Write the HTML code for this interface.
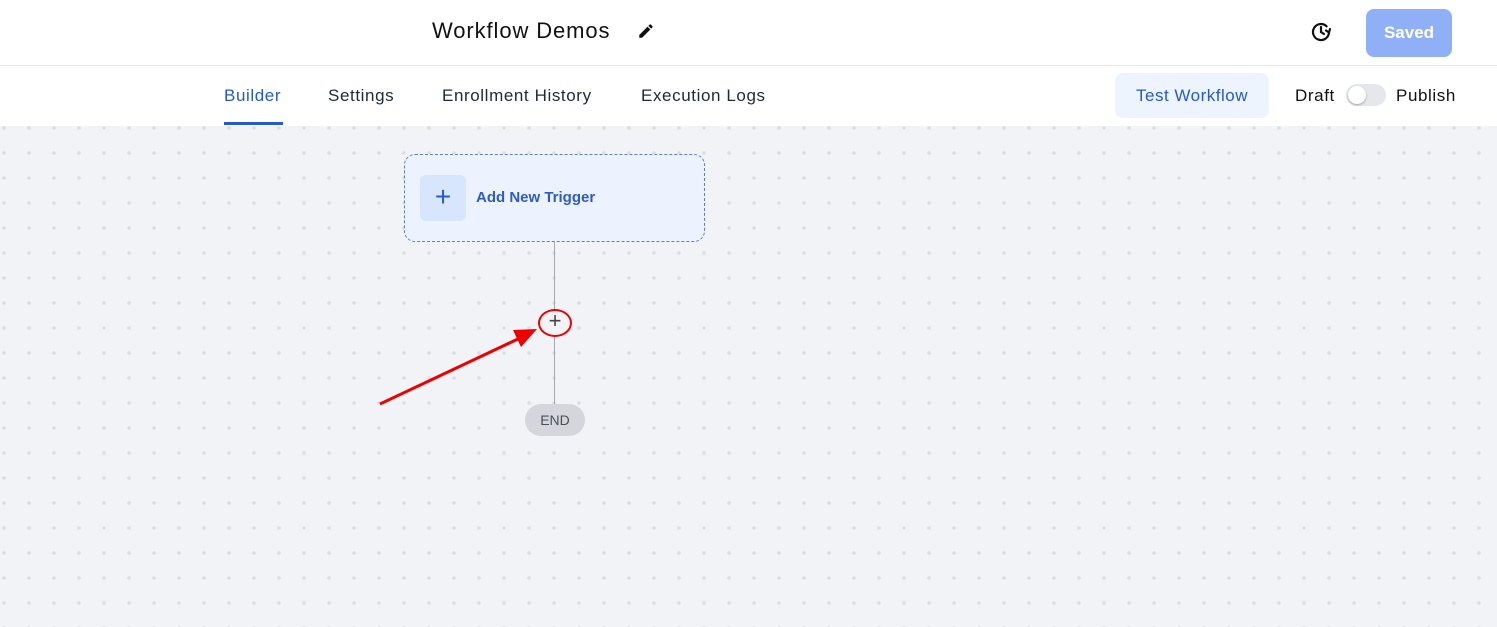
<!DOCTYPE html>
<html><head><style>
*{margin:0;padding:0;box-sizing:border-box}
body{width:1497px;height:627px;overflow:hidden;font-family:"Liberation Sans",sans-serif;background:#fff;position:relative}
.top{position:absolute;left:0;top:0;width:1497px;height:66px;border-bottom:1px solid #e5e7eb}
.title{position:absolute;left:432px;top:18px;font-size:22px;color:#111;letter-spacing:0.9px}
.tabs{position:absolute;top:66px;left:0;width:1497px;height:60px}
.tab{position:absolute;top:20px;font-size:17px;color:#1f2937;letter-spacing:0.6px}
.canvas{position:absolute;left:0;top:126px;width:1497px;height:501px;background-color:#f2f3f7;
background-image:radial-gradient(circle,#dcdde2 1.6px,transparent 2px);background-size:25px 25px;background-position:-8.5px -10.5px}
</style></head><body>
<div class="top">
<div class="title">Workflow Demos</div>
<svg style="position:absolute;left:637px;top:22px" width="18" height="18" viewBox="0 0 24 24"><path d="M3 17.25V21h3.75L17.81 9.94l-3.75-3.75L3 17.25zM20.71 7.04a1 1 0 000-1.41l-2.34-2.34a1 1 0 00-1.41 0l-1.83 1.83 3.75 3.75 1.83-1.83z" fill="#111"/></svg>
<svg style="position:absolute;left:1309px;top:20px" width="24" height="24" viewBox="0 0 24 24" fill="none" stroke="#111" stroke-width="2.2" stroke-linecap="round"><path d="M20 12a8 8 0 1 1-2.4-5.7"/><path d="M12 7v5l3 2"/><path d="M21 9l-1 3.5-3-2"/></svg>
<div style="position:absolute;left:1366px;top:9px;width:86px;height:48px;border-radius:8px;background:#8fb0f7;color:#fff;font-weight:bold;font-size:17px;text-align:center;line-height:48px">Saved</div>
</div>
<div class="tabs">
<div class="tab" style="left:224px;color:#2459d2">Builder</div>
<div style="position:absolute;left:224px;top:56px;width:59px;height:3px;background:#2459d2"></div>
<div class="tab" style="left:328px">Settings</div>
<div class="tab" style="left:442px">Enrollment History</div>
<div class="tab" style="left:641px">Execution Logs</div>
<div style="position:absolute;left:1115px;top:7px;width:154px;height:45px;border-radius:8px;background:#eef4fe;color:#2459d2;font-size:17px;letter-spacing:0.5px;text-align:center;line-height:45px">Test Workflow</div>
<div class="tab" style="left:1295px;color:#111">Draft</div>
<div style="position:absolute;left:1346px;top:18px;width:40px;height:22px;border-radius:11px;background:#e5e7eb"><div style="position:absolute;left:2px;top:2px;width:18px;height:18px;border-radius:50%;background:#fff;box-shadow:0 1px 2px rgba(0,0,0,.3)"></div></div>
<div class="tab" style="left:1396px;color:#111">Publish</div>
</div>
<div class="canvas"></div>
<div style="position:absolute;left:404px;top:154px;width:301px;height:88px;border:1px dashed #5b7fc4;border-radius:11px;background:#ecf3fe"></div>
<div style="position:absolute;left:420px;top:175px;width:46px;height:46px;border-radius:6px;background:#d7e6fd;color:#2459d2;font-size:28px;text-align:center;line-height:44px">+</div>
<div style="position:absolute;left:476px;top:189px;font-size:15px;font-weight:bold;color:#2e5bc7">Add New Trigger</div>
<div style="position:absolute;left:554px;top:242px;width:1px;height:164px;background:#a7a9ae"></div>
<div style="position:absolute;left:538px;top:309px;width:34px;height:28px;border-radius:50%;background:#f2f3f7;border:2px solid #e00"></div>
<div style="position:absolute;left:545px;top:308px;width:20px;text-align:center;font-size:22px;color:#444">+</div>
<div style="position:absolute;left:525px;top:404px;width:60px;height:32px;border-radius:16px;background:#d4d6db;color:#4b4f57;font-size:14px;text-align:center;line-height:32px">END</div>
<svg style="position:absolute;left:0;top:0" width="1497" height="627"><line x1="380" y1="404" x2="520" y2="338" stroke="#e00" stroke-width="3"/><polygon points="537,329 513,330 521,347" fill="#e00"/></svg>
</body></html>
